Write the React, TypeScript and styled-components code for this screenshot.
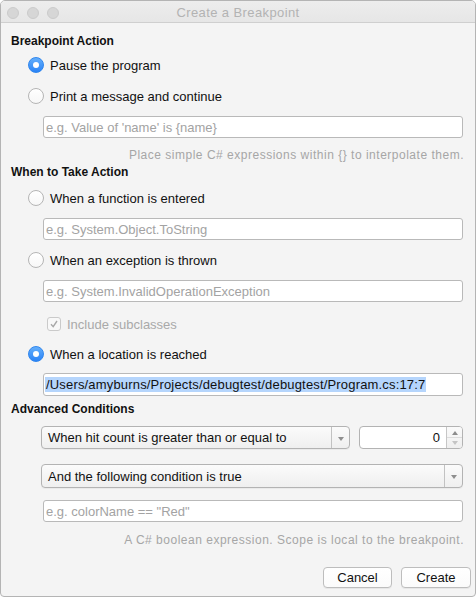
import React from "react";
import styled, { createGlobalStyle } from "styled-components";

const GlobalStyle = createGlobalStyle`
  html, body { margin: 0; padding: 0; background: #ffffff; }
  body { font-family: "Liberation Sans", Arial, "Helvetica Neue", sans-serif; }
  * { box-sizing: border-box; }
`;

const Window = styled.div`
  width: 476px;
  height: 597px;
  border: 1px solid #b4b4b4;
  border-radius: 5px 5px 4px 4px;
  background: #f4f4f4;
  overflow: hidden;
  display: flex;
  flex-direction: column;
  color: #111;
`;

const TitleBar = styled.div`
  height: 22px;
  flex: none;
  display: grid;
  grid-template-columns: 1fr auto 1fr;
  align-items: center;
  background: linear-gradient(#ededed, #e6e6e6);
  border-bottom: 1px solid #cfcfcf;
`;

const Lights = styled.div`
  display: flex;
  gap: 8px;
  padding-left: 6px;
  padding-top: 2px;
`;

const Light = styled.span`
  width: 12px;
  height: 12px;
  border-radius: 50%;
  background: #d6d6d6;
  border: 1px solid #cbcbcb;
`;

const Title = styled.div`
  font-size: 13px;
  color: #b3b3b3;
  letter-spacing: 0.4px;
  padding-top: 1px;
`;

const Content = styled.div`
  display: flex;
  flex-direction: column;
  padding: 0 12px 0 10px;
`;

const SectionTitle = styled.div<{ $mt: number }>`
  margin-top: ${(p) => p.$mt}px;
  font-size: 12px;
  font-weight: bold;
  line-height: 16px;
  height: 16px;
`;

const OptionRow = styled.label<{ $mt: number; $indent: number; $disabled?: boolean }>`
  margin-top: ${(p) => p.$mt}px;
  margin-left: ${(p) => p.$indent}px;
  height: 20px;
  display: flex;
  align-items: center;
  gap: 6px;
  font-size: 13px;
  color: ${(p) => (p.$disabled ? "#a9a9a9" : "#111")};
`;

const Radio = styled.span<{ $checked?: boolean }>`
  width: 16px;
  height: 16px;
  border-radius: 50%;
  flex: none;
  display: flex;
  align-items: center;
  justify-content: center;
  background: ${(p) =>
    p.$checked ? "linear-gradient(#63aefb, #2a83f6)" : "linear-gradient(#ffffff, #f7f7f7)"};
  border: 1px solid ${(p) => (p.$checked ? "#2f86ee" : "#b5b5b5")};
  &::after {
    content: "";
    width: 6px;
    height: 6px;
    border-radius: 50%;
    background: #fff;
    display: ${(p) => (p.$checked ? "block" : "none")};
  }
`;

const Check = styled.span`
  width: 14px;
  height: 14px;
  flex: none;
  border-radius: 3px;
  border: 1px solid #cacaca;
  background: #f8f8f8;
  display: flex;
  align-items: center;
  justify-content: center;
`;

const TextInput = styled.input<{ $mt: number }>`
  margin-top: ${(p) => p.$mt}px;
  margin-left: 32px;
  height: 22px;
  border: 1px solid #b9b9b9;
  border-radius: 3px;
  background: #ffffff;
  padding: 0 2px;
  font-family: inherit;
  font-size: 13px;
  color: #111;
  outline: none;
  &::placeholder { color: #a3a3a3; }
`;

const ValueField = styled.div<{ $mt: number }>`
  margin-top: ${(p) => p.$mt}px;
  margin-left: 32px;
  height: 23px;
  border: 1px solid #b9b9b9;
  border-radius: 3px;
  background: #ffffff;
  padding: 0 1px;
  display: flex;
  align-items: center;
  font-size: 13px;
`;

const Selection = styled.span`
  background: #b5d5fc;
  line-height: 15px;
  padding: 0 1px;
  letter-spacing: 0.17px;
  color: #111;
`;

const Hint = styled.div<{ $mt: number }>`
  margin-top: ${(p) => p.$mt}px;
  font-size: 12px;
  letter-spacing: 0.51px;
  line-height: 16px;
  color: #a6a6a6;
  text-align: right;
  margin-right: -1px;
`;

const ConditionRow = styled.div<{ $mt: number }>`
  margin-top: ${(p) => p.$mt}px;
  margin-left: 30px;
  display: flex;
  gap: 9px;
`;

const Popup = styled.div<{ $height: number }>`
  flex: 1;
  height: ${(p) => p.$height}px;
  border: 1px solid #b3b3b3;
  border-radius: 4px;
  background: linear-gradient(#fbfbfb, #efefef);
  display: flex;
  align-items: stretch;
  font-size: 13px;
  box-shadow: 0 1px 0 rgba(0, 0, 0, 0.04);
`;

const PopupLabel = styled.div`
  flex: 1;
  display: flex;
  align-items: center;
  padding-left: 6px;
`;

const PopupArrow = styled.div`
  width: 18px;
  border-left: 1px solid #c2c2c2;
  display: flex;
  align-items: center;
  justify-content: center;
  &::after {
    content: "";
    border-left: 3.5px solid transparent;
    border-right: 3.5px solid transparent;
    border-top: 4px solid #8e8e8e;
    margin-top: 2px;
  }
`;

const NumberField = styled.div`
  width: 104px;
  flex: none;
  height: 23px;
  border: 1px solid #b3b3b3;
  border-radius: 4px;
  background: #ffffff;
  display: flex;
  font-size: 13px;
  overflow: hidden;
`;

const NumberValue = styled.div`
  flex: 1;
  display: flex;
  align-items: center;
  justify-content: flex-end;
  padding-right: 6px;
`;

const Stepper = styled.div`
  width: 16px;
  border-left: 1px solid #c6c6c6;
  display: flex;
  flex-direction: column;
  background: linear-gradient(#fafafa, #efefef);
`;

const StepHalf = styled.div<{ $up?: boolean }>`
  flex: 1;
  display: flex;
  align-items: center;
  justify-content: center;
  border-top: ${(p) => (p.$up ? "none" : "1px solid #dcdcdc")};
  &::after {
    content: "";
    border-left: 3px solid transparent;
    border-right: 3px solid transparent;
    ${(p) =>
      p.$up
        ? "border-bottom: 4px solid #8c8c8c; margin-top: 1px;"
        : "border-top: 4px solid #c4c4c4; margin-bottom: 1px;"}
  }
`;

const Footer = styled.div`
  margin-top: 19px;
  padding-right: 4px;
  display: flex;
  justify-content: flex-end;
  gap: 9px;
`;

const Button = styled.button<{ $width: number }>`
  width: ${(p) => p.$width}px;
  height: 21px;
  border: 1px solid #bdbdbd;
  border-radius: 4px;
  background: linear-gradient(#ffffff, #fbfbfb);
  box-shadow: 0 1px 0 rgba(0, 0, 0, 0.05);
  font-family: inherit;
  font-size: 13px;
  color: #111;
  padding: 0;
`;

export default function App() {
  return (
    <>
      <GlobalStyle />
      <Window>
        <TitleBar>
          <Lights>
            <Light />
            <Light />
            <Light />
          </Lights>
          <Title>Create a Breakpoint</Title>
          <div />
        </TitleBar>
        <Content>
          <SectionTitle $mt={10}>Breakpoint Action</SectionTitle>
          <OptionRow $mt={6} $indent={17}>
            <Radio $checked />
            Pause the program
          </OptionRow>
          <OptionRow $mt={11} $indent={17}>
            <Radio />
            Print a message and continue
          </OptionRow>
          <TextInput $mt={10} readOnly placeholder="e.g. Value of 'name' is {name}" />
          <Hint $mt={9}>Place simple C# expressions within {"{}"} to interpolate them.</Hint>

          <SectionTitle $mt={1}>When to Take Action</SectionTitle>
          <OptionRow $mt={8} $indent={17}>
            <Radio />
            When a function is entered
          </OptionRow>
          <TextInput $mt={10} readOnly placeholder="e.g. System.Object.ToString" />
          <OptionRow $mt={10} $indent={17}>
            <Radio />
            When an exception is thrown
          </OptionRow>
          <TextInput $mt={10} readOnly placeholder="e.g. System.InvalidOperationException" />
          <OptionRow $mt={12} $indent={36} $disabled>
            <Check>
              <svg width="10" height="10" viewBox="0 0 10 10">
                <path d="M2 5.2 L4.2 7.6 L8 2" fill="none" stroke="#a8a8a8" strokeWidth="1.4" />
              </svg>
            </Check>
            Include subclasses
          </OptionRow>
          <OptionRow $mt={10} $indent={17}>
            <Radio $checked />
            When a location is reached
          </OptionRow>
          <ValueField $mt={9}>
            <Selection>/Users/amyburns/Projects/debugtest/debugtest/Program.cs:17:7</Selection>
          </ValueField>

          <SectionTitle $mt={5}>Advanced Conditions</SectionTitle>
          <ConditionRow $mt={9}>
            <Popup $height={23}>
              <PopupLabel>When hit count is greater than or equal to</PopupLabel>
              <PopupArrow />
            </Popup>
            <NumberField>
              <NumberValue>0</NumberValue>
              <Stepper>
                <StepHalf $up />
                <StepHalf />
              </Stepper>
            </NumberField>
          </ConditionRow>
          <ConditionRow $mt={15}>
            <Popup $height={24}>
              <PopupLabel>And the following condition is true</PopupLabel>
              <PopupArrow />
            </Popup>
          </ConditionRow>
          <TextInput $mt={12} readOnly placeholder={'e.g. colorName == "Red"'} />
          <Hint $mt={10}>A C# boolean expression. Scope is local to the breakpoint.</Hint>
        </Content>
        <Footer>
          <Button $width={69}>Cancel</Button>
          <Button $width={70}>Create</Button>
        </Footer>
      </Window>
    </>
  );
}
